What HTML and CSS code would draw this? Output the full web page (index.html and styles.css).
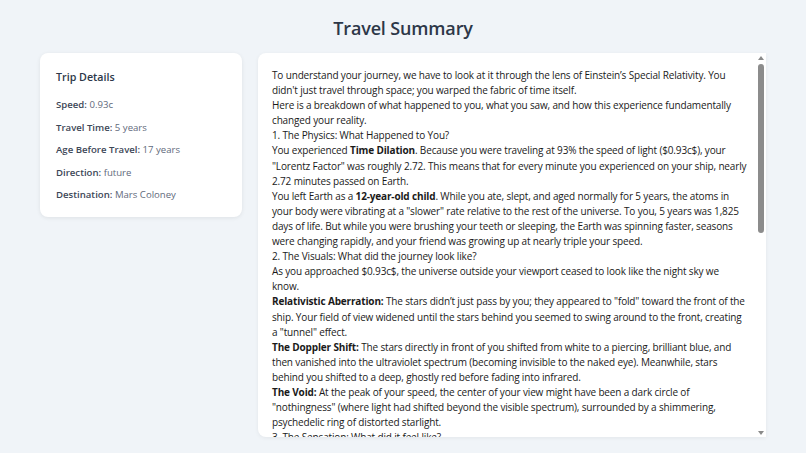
FILE: index.html
```html
<!DOCTYPE html>
<html>
<head>
<meta charset="utf-8">
<link rel="stylesheet" href="styles.css">
</head>
<body>
<h1 class="title">Travel Summary</h1>
<div class="layout">
  <aside class="card">
    <h2 class="card-title">Trip Details</h2>
    <p class="item"><span class="label">Speed:</span> 0.93c</p>
    <p class="item"><span class="label">Travel Time:</span> 5 years</p>
    <p class="item"><span class="label">Age Before Travel:</span> 17 years</p>
    <p class="item"><span class="label">Direction:</span> future</p>
    <p class="item"><span class="label">Destination:</span> Mars Coloney</p>
  </aside>
  <main class="panel">
    <div class="story">
      <p>To understand your journey, we have to look at it through the lens of Einstein’s Special Relativity. You didn't just travel through space; you warped the fabric of time itself.</p>
      <p>Here is a breakdown of what happened to you, what you saw, and how this experience fundamentally changed your reality.</p>
      <p>1. The Physics: What Happened to You?</p>
      <p>You experienced <b>Time Dilation</b>. Because you were traveling at 93% the speed of light ($0.93c$), your "Lorentz Factor" was roughly 2.72. This means that for every minute you experienced on your ship, nearly 2.72 minutes passed on Earth.</p>
      <p>You left Earth as a <b>12-year-old child</b>. While you ate, slept, and aged normally for 5 years, the atoms in your body were vibrating at a "slower" rate relative to the rest of the universe. To you, 5 years was 1,825 days of life. But while you were brushing your teeth or sleeping, the Earth was spinning faster, seasons were changing rapidly, and your friend was growing up at nearly triple your speed.</p>
      <p>2. The Visuals: What did the journey look like?</p>
      <p>As you approached $0.93c$, the universe outside your viewport ceased to look like the night sky we know.</p>
      <p><b>Relativistic Aberration:</b> The stars didn’t just pass by you; they appeared to "fold" toward the front of the ship. Your field of view widened until the stars behind you seemed to swing around to the front, creating a "tunnel" effect.</p>
      <p><b>The Doppler Shift:</b> The stars directly in front of you shifted from white to a piercing, brilliant blue, and then vanished into the ultraviolet spectrum (becoming invisible to the naked eye). Meanwhile, stars behind you shifted to a deep, ghostly red before fading into infrared.</p>
      <p><b>The Void:</b> At the peak of your speed, the center of your view might have been a dark circle of "nothingness" (where light had shifted beyond the visible spectrum), surrounded by a shimmering, psychedelic ring of distorted starlight.</p>
      <p>3. The Sensation: What did it feel like?</p>
      <p>Surprisingly, you felt nothing unusual. Inside the ship, time flowed normally for you.</p>
    </div>
    <div class="scrollbar">
      <span class="arrow up"></span>
      <span class="thumb"></span>
      <span class="arrow down"></span>
    </div>
  </main>
</div>
</body>
</html>
```
FILE: styles.css
```css
html, body {
  margin: 0;
  padding: 0;
}
body {
  background: #f0f4f8;
  font-family: "Segoe UI", "Open Sans", "Noto Sans", sans-serif;
  color: #1a202c;
  height: 453px;
  overflow: hidden;
}
.title {
  margin: 0;
  padding-top: 14px;
  height: 39px;
  text-align: center;
  font-size: 18px;
  letter-spacing: -0.15px;
  font-weight: 600;
  color: #2d3748;
  line-height: 29px;
}
.layout {
  display: flex;
  gap: 16px;
  padding: 0 40px;
  align-items: flex-start;
}
.card {
  width: 202px;
  flex: none;
  box-sizing: border-box;
  background: #fff;
  border-radius: 8px;
  box-shadow: 0 1px 4px rgba(0, 0, 0, 0.08);
  padding: 16px 16px 10px;
}
.card-title {
  margin: 0 0 9px;
  font-size: 10.7px;
  font-weight: 600;
  color: #2d3748;
  line-height: 16px;
}
.item {
  margin: 0;
  font-size: 9.6px;
  line-height: 22.5px;
  color: #5f6a7c;
}
.label {
  font-weight: 600;
  color: #3d4757;
}
.panel {
  flex: 1;
  height: 384px;
  position: relative;
  background: #fff;
  border-radius: 8px 0 0 8px;
  box-shadow: 0 1px 4px rgba(0, 0, 0, 0.06);
  overflow: hidden;
}
.story {
  padding: 15px 18px 14px 14px;
  font-size: 10px;
  letter-spacing: -0.15px;
  line-height: 15.1px;
  color: #1a1a1a;
}
.story p {
  margin: 0;
}
.story b {
  font-weight: 700;
}
.scrollbar {
  position: absolute;
  top: 0;
  right: 0;
  bottom: 0;
  width: 10px;
  background: #fff;
  display: flex;
  flex-direction: column;
  align-items: center;
}
.arrow {
  width: 0;
  height: 0;
  border-left: 3px solid transparent;
  border-right: 3px solid transparent;
}
.arrow.up {
  margin-top: 3px;
  border-bottom: 4px solid #8a8a8a;
}
.thumb {
  margin-top: 4px;
  width: 6px;
  height: 169px;
  border-radius: 3px;
  background: #8c8c8c;
}
.arrow.down {
  margin-top: auto;
  margin-bottom: 2px;
  border-top: 4px solid #8a8a8a;
}
```
